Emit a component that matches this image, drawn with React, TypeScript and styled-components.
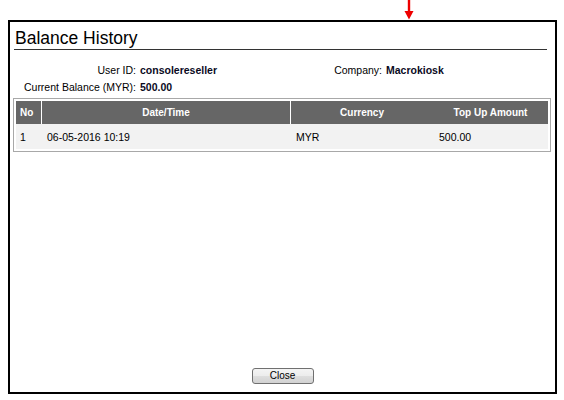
import React from "react";
import styled, { createGlobalStyle } from "styled-components";

const GlobalStyle = createGlobalStyle`
  html, body {
    margin: 0;
    padding: 0;
    background: #fff;
    font-family: "Liberation Sans", Arial, sans-serif;
    color: #000;
  }
`;

const ArrowStrip = styled.div`
  height: 20px;
  padding-left: 404px;
  svg {
    display: block;
  }
`;

const Dialog = styled.div`
  margin-left: 8px;
  width: 549px;
  height: 374px;
  box-sizing: border-box;
  border: 2px solid #000;
  background: #fff;
  display: flex;
  flex-direction: column;
`;

const Title = styled.h1`
  margin: 6px 8px 0 4px;
  padding-left: 1px;
  font-size: 17.5px;
  font-weight: normal;
  line-height: 21px;
  border-bottom: 1px solid #333;
`;

const InfoGrid = styled.div`
  margin-top: 12px;
  display: grid;
  grid-template-columns: 126px 130px 108px auto;
  column-gap: 4px;
  font-size: 10.5px;
  line-height: 17px;
`;

const InfoLabel = styled.span`
  text-align: right;
  white-space: nowrap;
`;

const InfoValue = styled.span`
  font-weight: bold;
  color: #0a0a1e;
  white-space: nowrap;
`;

const TableFrame = styled.div`
  margin: 2px 0 0 3px;
  width: 538px;
  box-sizing: border-box;
  border: 1px solid #a8a8a8;
  padding: 2px;
`;

const Row = styled.div<{ $head?: boolean }>`
  display: grid;
  grid-template-columns: 25px 249px 143px 1fr;
  height: ${(p) => (p.$head ? "23px" : "25px")};
  background: ${(p) => (p.$head ? "#666666" : "#f2f2f2")};
  color: ${(p) => (p.$head ? "#fff" : "#000")};
  font-size: ${(p) => (p.$head ? "10px" : "10.5px")};
  font-weight: ${(p) => (p.$head ? "bold" : "normal")};
`;

const Cell = styled.div<{ $center?: boolean; $divider?: boolean; $pad?: number }>`
  display: flex;
  align-items: center;
  justify-content: ${(p) => (p.$center ? "center" : "flex-start")};
  padding-left: ${(p) => (p.$center ? 0 : p.$pad ?? 5)}px;
  border-left: ${(p) => (p.$divider ? "1px solid #fff" : "none")};
  white-space: nowrap;
  overflow: hidden;
`;

const Footer = styled.div`
  margin-top: auto;
  padding-bottom: 8px;
  display: flex;
  justify-content: center;
`;

const CloseButton = styled.button`
  width: 62px;
  height: 16px;
  box-sizing: border-box;
  padding: 0;
  border: 1px solid #707070;
  border-radius: 3px;
  background: linear-gradient(#f4f4f4 0%, #ececec 50%, #dedede 51%, #d2d2d2 100%);
  font-family: "Liberation Sans", Arial, sans-serif;
  font-size: 10px;
  color: #000;
  line-height: 14px;
`;

const rows = [{ no: "1", date: "06-05-2016 10:19", currency: "MYR", amount: "500.00" }];

export default function App() {
  return (
    <>
      <GlobalStyle />
      <ArrowStrip>
        <svg width="10" height="20" viewBox="0 0 10 20">
          <rect x="3.8" y="0" width="2.4" height="12" fill="#ee0000" />
          <polygon points="0.5,11 9.5,11 5,19.5" fill="#ee0000" />
        </svg>
      </ArrowStrip>
      <Dialog>
        <Title>Balance History</Title>
        <InfoGrid>
          <InfoLabel>User ID:</InfoLabel>
          <InfoValue>consolereseller</InfoValue>
          <InfoLabel>Company:</InfoLabel>
          <InfoValue>Macrokiosk</InfoValue>
          <InfoLabel>Current Balance (MYR):</InfoLabel>
          <InfoValue>500.00</InfoValue>
        </InfoGrid>
        <TableFrame>
          <Row $head>
            <Cell $pad={4}>No</Cell>
            <Cell $center $divider>Date/Time</Cell>
            <Cell $center $divider>Currency</Cell>
            <Cell $center>Top Up Amount</Cell>
          </Row>
          {rows.map((r) => (
            <Row key={r.no}>
              <Cell $pad={4}>{r.no}</Cell>
              <Cell $pad={6}>{r.date}</Cell>
              <Cell $pad={6}>{r.currency}</Cell>
              <Cell $pad={6}>{r.amount}</Cell>
            </Row>
          ))}
        </TableFrame>
        <Footer>
          <CloseButton>Close</CloseButton>
        </Footer>
      </Dialog>
    </>
  );
}
